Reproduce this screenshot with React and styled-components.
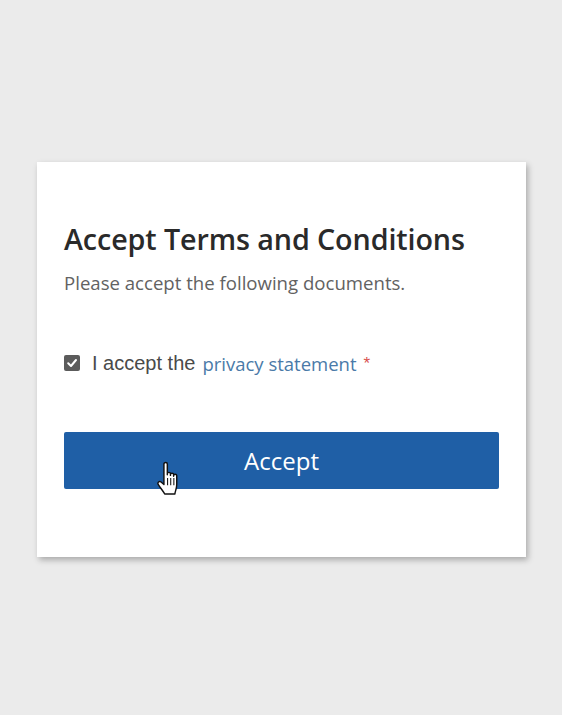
import styled, { createGlobalStyle } from 'styled-components';

const GlobalStyle = createGlobalStyle`
  html, body {
    margin: 0;
    padding: 0;
    background: #ebebeb;
  }
  body {
    font-family: "Open Sans", "Noto Sans", sans-serif;
  }
`;

const Page = styled.div`
  min-height: 715px;
  padding: 162px 0 0 37px;
  box-sizing: border-box;
`;

const Card = styled.div`
  width: 489px;
  height: 395px;
  box-sizing: border-box;
  background: #fff;
  padding: 56px 27px 0 27px;
  box-shadow: 2px 3px 6px rgba(0, 0, 0, 0.28);
`;

const Title = styled.h1`
  margin: 0;
  font-family: "Open Sans", sans-serif;
  font-weight: 600;
  font-size: 28.7px;
  line-height: 42px;
  color: #2a2a2a;
  letter-spacing: -0.1px;
`;

const Subtitle = styled.p`
  margin: 10px 0 0;
  font-family: "Open Sans", sans-serif;
  font-weight: 400;
  font-size: 18.6px;
  line-height: 26px;
  color: #626262;
`;

const CheckRow = styled.label`
  display: flex;
  align-items: center;
  margin-top: 55px;
  height: 24px;
  font-family: "Liberation Sans", Arial, sans-serif;
  font-size: 20px;
  color: #4a4a4a;
`;

const Box = styled.span`
  width: 16px;
  height: 16px;
  border-radius: 2px;
  background: #5b5b5b;
  display: inline-flex;
  align-items: center;
  justify-content: center;
  flex-shrink: 0;
  margin-right: 12px;
`;

const Link = styled.a`
  font-family: "Open Sans", sans-serif;
  font-size: 18.5px;
  color: #4a7aa8;
  text-decoration: none;
  margin-left: 7px;
`;

const Required = styled.span`
  color: #d9534f;
  font-size: 17px;
  margin-left: 7px;
  position: relative;
  top: 1px;
`;

const ButtonWrap = styled.div`
  position: relative;
  margin-top: 57px;
`;

const AcceptButton = styled.button`
  display: block;
  width: 100%;
  height: 57px;
  border: none;
  border-radius: 2px;
  background: #1f5fa6;
  color: #fff;
  font-family: "Open Sans", sans-serif;
  font-size: 24px;
  font-weight: 400;
  cursor: pointer;
`;

const Cursor = styled.svg`
  position: absolute;
  left: 92px;
  top: 29px;
  pointer-events: none;
`;

const CheckIcon = () => (
  <svg width="12" height="12" viewBox="0 0 12 12">
    <path d="M2.2 6.2 L5 9 L10 3" fill="none" stroke="#fff" strokeWidth="2" strokeLinecap="round" strokeLinejoin="round" />
  </svg>
);

const HandCursor = () => (
  <Cursor width="25" height="34" viewBox="0 0 19 26">
    <path
      d="M6 2.2 C6 0.8 8.6 0.8 8.6 2.2 L8.6 10.5 L8.6 9.6 C8.6 8.4 11 8.4 11 9.6 L11 11 L11 10.2 C11 9 13.4 9 13.4 10.2 L13.4 11.6 L13.4 11 C13.4 9.8 15.8 9.8 15.8 11 L15.8 18 C15.8 21.5 14.4 23.5 14.4 25.2 L6.6 25.2 C5.6 23.2 3.2 20.5 1.6 17.8 C0.8 16.4 2.4 15 3.8 16.1 L6 18 Z"
      fill="#fff"
      stroke="#111"
      strokeWidth="1.1"
      strokeLinejoin="round"
    />
    <path d="M8.8 13 L8.8 18.5 M11.2 13 L11.2 18.5 M13.6 13 L13.6 18.5" stroke="#111" strokeWidth="0.8" />
  </Cursor>
);

const App = () => {
  return (
    <>
      <GlobalStyle />
      <Page>
        <Card>
          <Title>Accept Terms and Conditions</Title>
          <Subtitle>Please accept the following documents.</Subtitle>
          <CheckRow>
            <Box>
              <CheckIcon />
            </Box>
            <span>I accept the</span>
            <Link href="#">privacy statement</Link>
            <Required>*</Required>
          </CheckRow>
          <ButtonWrap>
            <AcceptButton>Accept</AcceptButton>
            <HandCursor />
          </ButtonWrap>
        </Card>
      </Page>
    </>
  );
};

export default App;
